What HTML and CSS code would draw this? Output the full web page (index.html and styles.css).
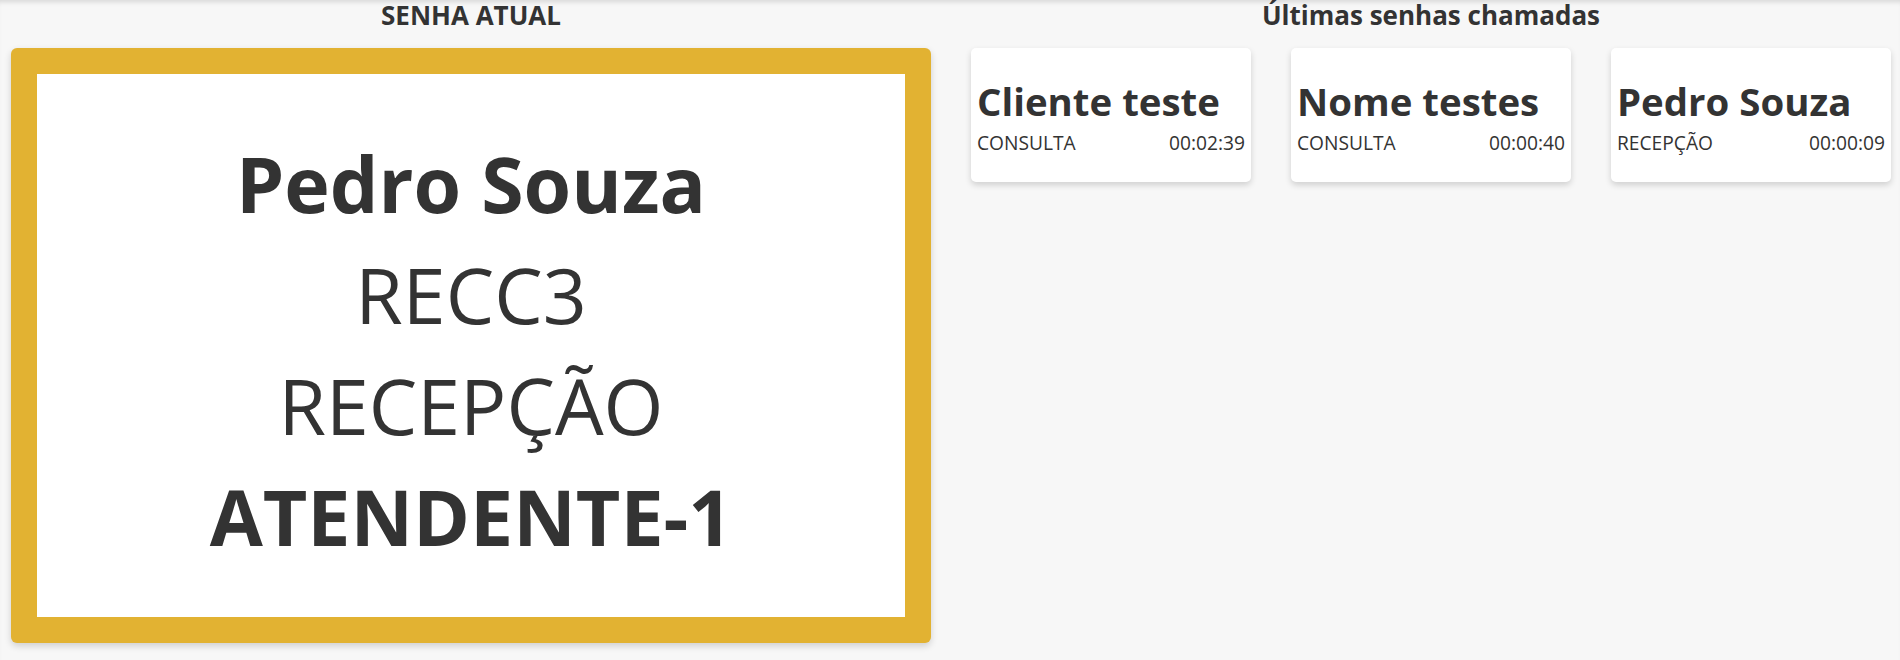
FILE: index.html
```html
<!DOCTYPE html>
<html lang="pt-BR">
<head>
    <meta charset="UTF-8">
    <title>Painel de senhas</title>
    <link rel="stylesheet" href="styles.css">
</head>
<body>
    <div class="painel">
        <div class="coluna">
            <h2 class="titulo">SENHA ATUAL</h2>
            <div class="senha-atual">
                <div class="senha-conteudo">
                    <div class="linha forte">Pedro Souza</div>
                    <div class="linha">RECC3</div>
                    <div class="linha">RECEPÇÃO</div>
                    <div class="linha forte">ATENDENTE-1</div>
                </div>
            </div>
        </div>
        <div class="coluna">
            <h2 class="titulo">Últimas senhas chamadas</h2>
            <div class="ultimas">
                <div class="card">
                    <h3 class="card-nome">Cliente teste</h3>
                    <div class="card-info">
                        <span>CONSULTA</span>
                        <span>00:02:39</span>
                    </div>
                </div>
                <div class="card">
                    <h3 class="card-nome">Nome testes</h3>
                    <div class="card-info">
                        <span>CONSULTA</span>
                        <span>00:00:40</span>
                    </div>
                </div>
                <div class="card">
                    <h3 class="card-nome">Pedro Souza</h3>
                    <div class="card-info">
                        <span>RECEPÇÃO</span>
                        <span>00:00:09</span>
                    </div>
                </div>
            </div>
        </div>
    </div>
</body>
</html>
```

FILE: styles.css
```css
*{
    padding: 0;
    margin: 0;
    box-sizing: border-box;
}
html,body{
    height: 100%;
}
body{
    background: #f7f7f7;
    color: #333;
    font-family: "Open Sans", "Noto Sans", sans-serif;
    box-shadow: inset 0 5px 5px -3px rgba(0,0,0,.13);
}
.painel{
    display: grid;
    grid-template-columns: 920px 920px;
    column-gap: 40px;
    padding: 0 9px 0 11px;
}
.titulo{
    font-size: 26px;
    font-weight: 700;
    line-height: 31px;
    text-align: center;
    margin-bottom: 17px;
}
.senha-atual{
    background: #e2b232;
    padding: 26px;
    border-radius: 6px;
    box-shadow: 0 3px 7px rgba(0,0,0,.16);
}
.senha-conteudo{
    background: #fff;
    height: 543px;
    padding-top: 9px;
    display: flex;
    flex-direction: column;
    justify-content: center;
    align-items: center;
}
.linha{
    font-size: 77px;
    font-weight: 400;
    line-height: 111px;
    white-space: nowrap;
}
.linha.forte{
    font-weight: 700;
}
.ultimas{
    display: grid;
    grid-template-columns: repeat(3, 280px);
    column-gap: 40px;
}
.card{
    background: #fff;
    border-radius: 5px;
    box-shadow: 0 3px 6px rgba(0,0,0,.16);
    padding: 30px 6px 24px;
    height: 134px;
}
.card-nome{
    font-size: 38.4px;
    font-weight: 700;
    line-height: 46px;
    margin-bottom: 5px;
    white-space: nowrap;
}
.card-info{
    display: flex;
    justify-content: space-between;
    font-size: 19.2px;
    line-height: 28px;
}
```
